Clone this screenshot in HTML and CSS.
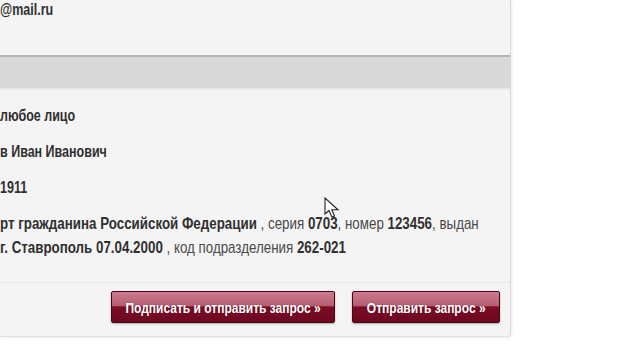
FILE: index.html
```html
<!DOCTYPE html>
<html lang="ru">
<head>
  <meta charset="UTF-8" />
  <title>Запрос</title>
  <link rel="stylesheet" href="styles.css">
</head>
<body>
  <div class="panel">
    <div class="top">
      <div class="narrow"><b>@mail.ru</b></div>
    </div>
    <div class="band"></div>
    <div class="rows">
      <div class="narrow"><b>любое лицо</b></div>
      <div class="narrow"><b>в Иван Иванович</b></div>
      <div class="narrow"><b>1911</b></div>
      <div class="narrow passport">
        <b>рт гражданина Российской Федерации</b> , серия <b>0703</b>, номер <b>123456</b>, выдан<br>
        <b>г. Ставрополь 07.04.2000</b> , код подразделения <b>262-021</b>
      </div>
    </div>
    <div class="actions">
      <button class="btn sign"><span>Подписать и отправить запрос »</span></button>
      <button class="btn send"><span>Отправить запрос »</span></button>
    </div>
  </div>

  <svg class="cursor" width="18" height="22" viewBox="0 0 18 22">
    <path d="M1 1 L1 17 L5 13.5 L8 20 L10.5 19 L7.8 12.8 L14 12.8 Z" fill="#fff" stroke="#222" stroke-width="1.1" stroke-linejoin="miter"/>
  </svg>
</body>
</html>
```

FILE: styles.css
```css
body {
  margin: 0;
  height: 360px;
  overflow: hidden;
  background: #fff;
  font-family: "Liberation Sans", Arial, sans-serif;
  color: #4a4a4a;
  position: relative;
}

.panel {
  width: 510px;
  height: 336px;
  background: #f4f4f4;
  border-right: 1px solid #d6d6d6;
  border-bottom: 1px solid #e2e2e2;
  box-shadow: 1px 1px 3px rgba(0, 0, 0, 0.08);
  border-bottom-right-radius: 4px;
  display: flex;
  flex-direction: column;
  overflow: hidden;
}

/* the source is squeezed horizontally */
.narrow {
  width: 720px;
  transform: scaleX(0.735);
  transform-origin: 0 0;
  font-size: 17px;
  line-height: 20px;
  white-space: nowrap;
}

b {
  font-weight: bold;
  color: #303030;
}

.top {
  height: 55px;
}

.band {
  height: 31px;
  background: #d9d9d9;
  border-top: 2px solid #b4b4b4;
  border-bottom: 2px solid #e9e9e9;
}

.rows {
  padding-top: 16px;
  display: flex;
  flex-direction: column;
  gap: 16px;
}

.passport {
  transform: scaleX(0.785);
  line-height: 24px;
  margin-top: -2px;
}

.actions {
  margin-top: auto;
  border-top: 1px solid #e6e6e6;
  padding: 8px 10px 13px 111px;
  display: flex;
  gap: 17px;
}

.btn {
  height: 32px;
  padding: 0;
  font-family: inherit;
  font-size: 15px;
  font-weight: bold;
  color: #fff;
  border: 1px solid #4a0414;
  border-radius: 2px;
  background: linear-gradient(#cc7d90 0%, #b65c73 45%, #7c0c26 50%, #6c0820 100%);
  box-shadow: 0 1px 2px rgba(0, 0, 0, 0.3);
  cursor: pointer;
  white-space: nowrap;
  overflow: hidden;
  display: flex;
  align-items: center;
  justify-content: center;
}

.btn span {
  display: inline-block;
  transform: scaleX(0.8);
  text-shadow: 0 0 1px rgba(60, 0, 10, 0.6);
}

.sign {
  width: 225px;
}

.send {
  width: 148px;
}

.cursor {
  position: absolute;
  left: 324px;
  top: 197px;
}
```
